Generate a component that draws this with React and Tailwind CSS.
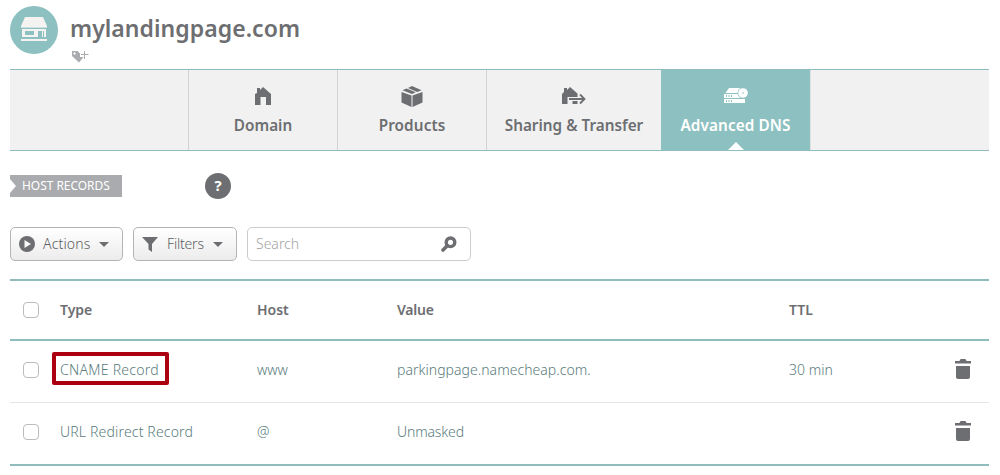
const Shop = () => (
  <svg width="48" height="48" viewBox="0 0 48 48" className="shrink-0">
    <circle cx="24" cy="24" r="24" fill="#8dc1c1" />
    <path d="M15 11h18l4 9H11z" fill="#f5f3f2" />
    <path d="M11 20h26v1.200q-1 1-2 0-1 1-2 0-1 1-2 0-1 1-2 0-1 1-2 0-1 1-2 0-1 1-2 0-1 1-2 0-1 1-2 0-1 1-2 0-1 1-2 0-1 1-2 0-1 1-2 0z" fill="#f5f3f2" />
    <path fillRule="evenodd" d="M12 23h24v8h-4v-6h-4v6H12zM15 25v4h9v-4z" fill="#f5f3f2" />
    <path d="M33 25h1v6h-1z" fill="#8dc1c1" />
    <path d="M11 33h26v2H11z" fill="#f5f3f2" />
  </svg>
);
const TagPlus = () => (
  <svg width="17" height="13" viewBox="0 0 17 13" fill="#a9abae">
    <path fillRule="evenodd" d="M0 1h5.500L8 3.500V7h3.500L7 12.500 0 6zM2.500 2.300a1.200 1.200 0 1 0 .01 0z" />
    <path d="M12 1h1v3h3.500v1H13v4h-1V5H9V4h3z" />
  </svg>
);
const House = () => (
  <svg width="16" height="18" viewBox="0 0 16 18" fill="currentColor">
    <path d="M2 6V1h3v2l3-3 8 7v11h-5v-8H5.500v8H0V7z" />
  </svg>
);
const Box = () => (
  <svg width="22" height="22" viewBox="0 0 22 22" fill="currentColor">
    <path d="M.5 7l10 3.500V22l-10-4.500zM21.500 7l-10 3.500V22l10-4.500zM1.500 5.200l4-1.700 9.200 3.800L11 9zM7 3l4-2 9.500 4.200-4.300 1.700z" />
  </svg>
);
const HouseArrow = () => (
  <svg width="24" height="18" viewBox="0 0 24 18">
    <path d="M2 5V1h3v2l3-3 7.500 6.500V10H5.500v7H0V7z" fill="currentColor" />
    <path d="M10.500 14h5v3h-5z" fill="currentColor" />
    <path d="M7 12h15M18 7.500l4.500 4.500-4.500 4.500" stroke="currentColor" strokeWidth="1.800" fill="none" />
  </svg>
);
const Server = () => (
  <svg width="24" height="17" viewBox="0 0 24 17" fill="#fff">
    <path d="M5 1h11l3 5H1.500z" />
    <path d="M0 7h21v4H0zM0 12h21v4H0z" />
    <path d="M2 9h1M4.500 9h1M7 9h1M2 14h1M4.500 14h1M7 14h1" stroke="#8dc1c1" strokeWidth="2" />
    <circle cx="19" cy="6" r="5.500" fill="#8dc1c1" />
    <circle cx="19" cy="6" r="4.800" />
    <circle cx="19" cy="6" r=".8" fill="#8dc1c1" />
  </svg>
);
const Play = () => (
  <svg width="16" height="16" viewBox="0 0 16 16">
    <circle cx="8" cy="8" r="8" fill="#6d6e71" />
    <path d="M5.500 4l6.500 4-6.500 4z" fill="#fafafa" />
  </svg>
);
const Funnel = () => (
  <svg width="16" height="15" viewBox="0 0 16 15" fill="#6d6e71">
    <path d="M0 0h16l-6 7v8l-3.500-2.500V7z" />
  </svg>
);
const Caret = () => (
  <svg width="10" height="5" viewBox="0 0 10 5" fill="#6d6e71">
    <path d="M0 0h10L5 5z" />
  </svg>
);
const Magnifier = () => (
  <svg width="16" height="16" viewBox="0 0 16 16" fill="none" stroke="#6d6e71">
    <circle cx="9.500" cy="6.300" r="4.300" strokeWidth="3.400" />
    <path d="M6 10l-4 4" strokeWidth="3.600" strokeLinecap="round" />
  </svg>
);
const Trash = () => (
  <svg width="16" height="20" viewBox="0 0 16 20" fill="#6d6e71" className="mb-px">
    <path d="M0 2h4.500Q5 0 6 0h4q1 0 1.500 2H16v2.500H0zM1 7h14v11q0 2-2 2H3q-2 0-2-2z" />
  </svg>
);
const Check = () => <span className="ml-[13px] size-4 rounded-[4px] border border-[#bcbcbc] bg-white" />;

const tabs = [
  { label: "Domain", icon: <House />, width: "w-[149px]", track: "" },
  { label: "Products", icon: <Box />, width: "w-[149px]", track: "tracking-[0.1px]" },
  { label: "Sharing & Transfer", icon: <HouseArrow />, width: "w-[175px]", track: "" },
];
const cols = "grid grid-cols-[50px_197px_140px_392px_166px_1fr] items-center";

export default function App() {
  return (
    <div className="h-[475px] w-[1000px] overflow-hidden bg-white pl-[10px] pr-[11px] font-['Noto_Sans',sans-serif] text-[14px] font-light text-[#5c5d60]">
      <header className="flex h-[69px] gap-3 pt-[6px] text-[#6d6e71]">
        <Shop />
        <div>
          <h1 className="mt-[3px] h-[38px] text-[23px] font-semibold leading-[38px] tracking-[0.05px]">mylandingpage.com</h1>
          <div className="ml-[2px] mt-[3px]"><TagPlus /></div>
        </div>
      </header>

      <nav className="flex h-[82px] border-y border-[#8fbcbc] bg-[#f1f1f1] pl-[178px] text-[15.3px] font-semibold text-[#6d6e71]">
        {tabs.map((t) => (
          <div key={t.label} className={`flex flex-col items-center border-l border-[#d0d2d3] pt-[15px] ${t.width}`}>
            <div className="flex h-[22px] items-center">{t.icon}</div>
            <div className={`mt-[6px] whitespace-nowrap leading-6 ${t.track}`}>{t.label}</div>
          </div>
        ))}
        <div className="flex w-[149px] flex-col items-center bg-[#8dc1c1] pt-[15px] text-white">
          <div className="flex h-[21px] items-center">
            <Server />
          </div>
          <div className="mt-[7px] whitespace-nowrap leading-6 tracking-[0.1px]">Advanced DNS</div>
          <svg width="16" height="8" viewBox="0 0 16 8" className="mt-auto" fill="#fff"><path d="M0 8l8-8 8 8z" /></svg>
        </div>
        <div className="w-px bg-[#e0e2e2]" />
      </nav>

      <div className="mt-[22px] flex h-[26px] items-center">
        <div className="flex h-[22px] w-[112px] items-center bg-[#a9abae] text-[12px] font-normal text-white">
          <svg width="6" height="14" viewBox="0 0 6 14" className="mr-[6px]" fill="#fff"><path d="M0 0l6 7-6 7z" /></svg>
          <span className="whitespace-nowrap tracking-[-0.05px]">HOST RECORDS</span>
        </div>
        <div className="ml-[83px] flex size-[26px] items-center justify-center rounded-full bg-[#6d6e71] pb-px text-[15px] font-bold text-white">?</div>
      </div>

      <div className="mt-7 flex h-[34px]">
        <button className="flex w-[113px] items-center rounded-[5px] border border-[#b4b4b4] bg-linear-to-b from-white to-[#ececec] pl-2">
          <Play />
          <span className="ml-2 mr-[7px] w-[49px] pb-[2px] text-left tracking-[0.15px]">Actions</span>
          <Caret />
        </button>
        <button className="ml-[10px] flex w-[104px] items-center rounded-[5px] border border-[#b4b4b4] bg-linear-to-b from-white to-[#ececec] pl-2">
          <Funnel />
          <span className="ml-[9px] mr-[9px] w-[37px] pb-[2px] text-left tracking-[-0.2px]">Filters</span>
          <Caret />
        </button>
        <div className="ml-[10px] flex w-[224px] items-center justify-between rounded-[5px] border border-[#ccc] pl-2 pr-[13px] text-[#a4a4a4]">
          <span className="pb-[2px]">Search</span>
          <Magnifier />
        </div>
      </div>

      <section className="mt-[18px] border-y-2 border-[#8fbcbc]">
        <div className={`h-[60px] border-b-2 border-[#8fbcbc] font-semibold text-[#6d6e71] ${cols}`}>
          <Check />
          <span className="pb-[2px]">Type</span>
          <span className="pb-[2px]">Host</span>
          <span className="pb-[2px] tracking-[-0.2px]">Value</span>
          <span className="pb-[2px]">TTL</span>
        </div>
        <div className={`h-[62px] border-b border-[#e6e6e6] pb-1 text-[#597c7c] ${cols}`}>
          <Check />
          <span className="relative tracking-[0.27px]">
            CNAME Record
            <span className="absolute -left-2 -top-[7px] h-[33px] w-[117px] rounded-[2px] border-4 border-[#ab0010]" />
          </span>
          <span>www</span>
          <span className="tracking-[0.04px]">parkingpage.namecheap.com.</span>
          <span>30 min</span>
          <Trash />
        </div>
        <div className={`h-[61px] pb-1 text-[#597c7c] ${cols}`}>
          <Check />
          <span className="tracking-[0.17px]">URL Redirect Record</span>
          <span>@</span>
          <span className="tracking-[-0.15px]">Unmasked</span>
          <span />
          <Trash />
        </div>
      </section>
    </div>
  );
}
